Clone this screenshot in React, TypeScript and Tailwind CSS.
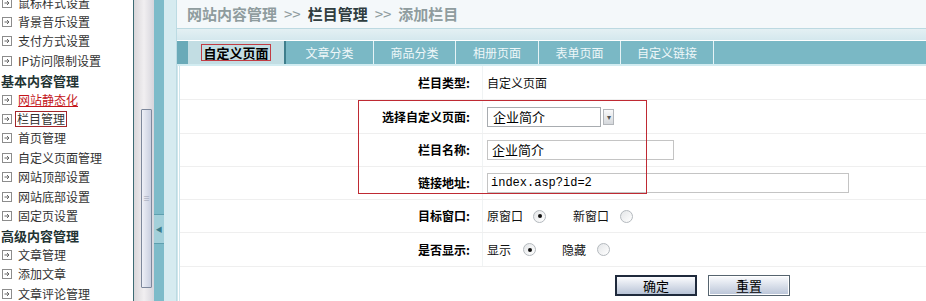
import React from 'react';

const font = { fontFamily: '"Noto Sans CJK SC", "Liberation Sans", sans-serif' };

type MenuItem = { label: string; kind?: 'header' | 'red' | 'boxed' };

const menu: MenuItem[] = [
  { label: '鼠标样式设置' },
  { label: '背景音乐设置' },
  { label: '支付方式设置' },
  { label: 'IP访问限制设置' },
  { label: '基本内容管理', kind: 'header' },
  { label: '网站静态化', kind: 'red' },
  { label: '栏目管理', kind: 'boxed' },
  { label: '首页管理' },
  { label: '自定义页面管理' },
  { label: '网站顶部设置' },
  { label: '网站底部设置' },
  { label: '固定页设置' },
  { label: '高级内容管理', kind: 'header' },
  { label: '文章管理' },
  { label: '添加文章' },
  { label: '文章评论管理' },
];

// tab widths differ a little in the original, so they are listed with their labels
const tabs = [
  { label: '文章分类', w: 'w-[88px]' },
  { label: '商品分类', w: 'w-[82px]' },
  { label: '相册页面', w: 'w-[83px]' },
  { label: '表单页面', w: 'w-[82px]' },
  { label: '自定义链接', w: 'w-[93px]' },
];

// little "go" square in front of every menu entry
const ItemIcon = () => (
  <svg width="10" height="10" viewBox="0 0 10 10" className="shrink-0">
    <rect x="0.5" y="0.5" width="9" height="9" fill="white" stroke="#8c8c8c" />
    <path d="M2.5 5h4.5M5 3l2 2-2 2" fill="none" stroke="#666" strokeWidth="1" />
  </svg>
);

const Radio = ({ checked }: { checked?: boolean }) => (
  <span className="inline-flex items-center justify-center w-[13px] h-[13px] rounded-full border border-[#b4b9be] bg-gradient-to-br from-[#e4e6e8] to-[#ffffff]">
    {checked && <span className="w-[4px] h-[4px] rounded-full bg-[#111]" />}
  </span>
);

const Row = ({ label, h, children }: { label: string; h: string; children: React.ReactNode }) => (
  <div className={`flex border-b border-[#efefef] ${h}`}>
    <div className="w-[303px] shrink-0 flex items-center justify-end pr-[12px] border-r border-[#f0f3f4] font-bold text-[12px] text-black">
      {label}
    </div>
    <div className="flex items-center pl-[4px] text-[12px] text-[#111]">{children}</div>
  </div>
);

export default function App() {
  return (
    <div className="w-[926px] h-[301px] overflow-hidden flex bg-white" style={font}>
      {/* left menu */}
      <div className="w-[133px] shrink-0 overflow-hidden">
        <div className="-mt-[7px]">
          {menu.map((m) =>
            m.kind === 'header' ? (
              <div key={m.label} className="h-[19.4px] flex items-center pl-[1px] text-[13px] font-bold text-[#233]">
                {m.label}
              </div>
            ) : (
              <div key={m.label} className="h-[19.4px] flex items-center gap-[6px] pl-[2px] text-[12px] text-[#333]">
                <ItemIcon />
                {m.kind === 'red' && <span className="text-[#c4161c] underline">{m.label}</span>}
                {m.kind === 'boxed' && (
                  <span className="border border-[#a3262b] px-[1px] leading-[14px] -ml-[3px]">{m.label}</span>
                )}
                {!m.kind && <span>{m.label}</span>}
              </div>
            ),
          )}
        </div>
      </div>

      {/* scrollbar + collapse strip */}
      <div className="w-[1px] shrink-0 bg-[#3d6b74]" />
      <div className="w-[20px] shrink-0 bg-gradient-to-r from-[#d9d7da] via-[#f1eff1] to-[#d6d5dc] pt-[109px]">
        <div className="ml-[7px] w-[11px] h-[179px] border border-[#7d889c] rounded-[1px] bg-gradient-to-r from-[#eef0f7] to-[#c9cfe0] flex items-center justify-center">
          <span className="text-[7px] leading-none text-[#9aa2b3]">≡</span>
        </div>
      </div>
      <div className="w-[10px] shrink-0 bg-[#7dbbc9] pt-[214px]">
        <div className="h-[30px] border-y border-[#5e9fae] bg-[#a3d0da] flex items-center justify-center">
          <span className="text-[7px] text-[#3c7d8c] leading-none">◀</span>
        </div>
      </div>
      <div className="w-[12px] shrink-0 bg-[#d6ebf0]" />

      {/* main */}
      <div className="flex-1 flex flex-col border-l border-[#bcdbe3] bg-[#dcebf0]">
        <div className="h-[29px] shrink-0 bg-[#f4f8fa] border-b border-[#bcd9e1] flex items-center pl-[10px] text-[15px] font-bold text-[#8f9c9e] gap-[7px]">
          <span>网站内容管理</span>
          <span className="font-normal">&gt;&gt;</span>
          <span className="text-[#2f3d40]">栏目管理</span>
          <span className="font-normal">&gt;&gt;</span>
          <span>添加栏目</span>
        </div>
        <div className="h-[11px] shrink-0 bg-gradient-to-b from-[#e4f0f3] to-[#d4e8ee]" />
        <div className="h-[1px] shrink-0 bg-white" />
        <div className="h-[23px] shrink-0 bg-[#7ab8c5] flex text-[12px] text-[#eef7f9]">
          <div className="w-[11px] bg-[#6aaab8]" />
          <div className="w-[98px] bg-[#c2dde3] flex items-center justify-center border-r-2 border-[#3f7e8c]">
            <span className="font-bold text-[13px] text-black border border-[#c23c44] px-[1px] leading-[15px]">自定义页面</span>
          </div>
          {tabs.map((t) => (
            <div key={t.label} className={`${t.w} flex items-center justify-center border-r border-[#e6f3f6]`}>
              {t.label}
            </div>
          ))}
        </div>
        <div className="h-[2px] shrink-0 bg-[#d2ecf1]" />
        <div className="flex-1 bg-white border-l-[3px] border-double border-[#cfe6ec]">
          <Row label="栏目类型:" h="h-[34px]">
            <span>自定义页面</span>
          </Row>
          <div className="relative">
            <div className="absolute left-[178px] top-[0px] w-[289px] h-[94px] border border-[#bf2a33] pointer-events-none" />
            <Row label="选择自定义页面:" h="h-[34px]">
              <div className="flex items-center gap-[2px]">
                <div className="w-[114px] h-[20px] border border-[#a8acb0] flex items-center pl-[5px] text-[13px] text-black bg-white">
                  企业简介
                </div>
                <div className="w-[11px] h-[16px] border border-[#b3b6ba] bg-gradient-to-b from-[#fafafa] to-[#d5d8dc] flex items-center justify-center text-[8px] text-[#555] leading-none">
                  ▾
                </div>
              </div>
            </Row>
            <Row label="栏目名称:" h="h-[33px]">
              <div className="w-[187px] h-[20px] border border-[#c4c4c4] flex items-center pl-[4px] text-[13px] text-black">
                企业简介
              </div>
            </Row>
            <Row label="链接地址:" h="h-[33px]">
              <div
                className="w-[362px] h-[20px] border border-[#c4c4c4] flex items-center pl-[3px] text-[12px] text-black"
                style={{ fontFamily: '"Liberation Mono", "Noto Sans CJK SC", monospace' }}
              >
                index.asp?id=2
              </div>
            </Row>
          </div>
          <Row label="目标窗口:" h="h-[33px]">
            <span>原窗口</span>
            <span className="ml-[10px] flex"><Radio checked /></span>
            <span className="ml-[27px]">新窗口</span>
            <span className="ml-[11px] flex"><Radio /></span>
          </Row>
          <Row label="是否显示:" h="h-[34px]">
            <span>显示</span>
            <span className="ml-[12px] flex"><Radio checked /></span>
            <span className="ml-[26px]">隐藏</span>
            <span className="ml-[11px] flex"><Radio /></span>
          </Row>
          <div className="flex gap-[11px] pl-[435px] pt-[8px]">
            <button className="w-[82px] h-[21px] border-2 border-[#1f2a3c] bg-gradient-to-b from-[#fbfcfe] to-[#b9c4d7] text-[13px] text-black leading-none">
              确定
            </button>
            <button className="w-[82px] h-[21px] border border-[#56646f] shadow-[inset_0_0_0_1px_#ffffff] bg-gradient-to-b from-[#fbfcfe] to-[#b9c4d7] text-[13px] text-black leading-none">
              重置
            </button>
          </div>
        </div>
      </div>
    </div>
  );
}
